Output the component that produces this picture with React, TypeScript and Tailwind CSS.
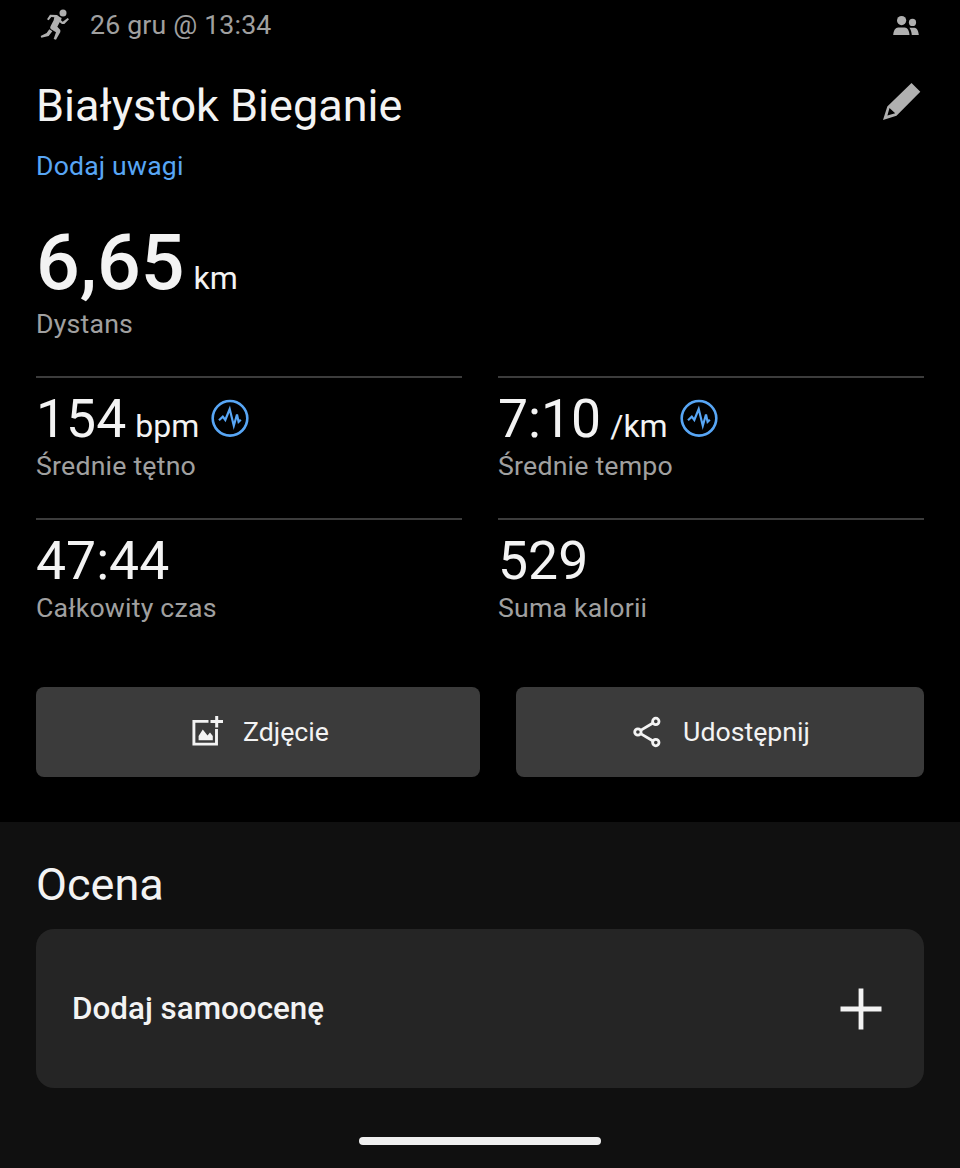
import type { ReactNode } from "react";

const stats = [
  { value: "154", unit: "bpm", label: "Średnie tętno", chart: true },
  { value: "7:10", unit: "/km", label: "Średnie tempo", chart: true },
  { value: "47:44", label: "Całkowity czas" },
  { value: "529", label: "Suma kalorii" },
];

function RunnerIcon() {
  return (
    <svg width="50" height="42" viewBox="0 0 150 126" fill="#b0b0b0">
      <circle cx="99" cy="24" r="10.5" />
      <path d="M60 29 L81 30 L89 36 L95 39 L93 46 L98 50 L113 39 L117 43 L103 57 L96 57 L89 52 L82 65 L91 75 L91 81 L78 104 L71 102 L78 82 L62 72 Q59 68 62 63 L71 46 L73 37 L64 36 L56 46 L51 43 Z" />
      <path d="M58 73 L67 79 L56 93 L34 98 L32 93 L50 84 Z" />
    </svg>
  );
}

function PeopleIcon() {
  return (
    <svg width="26" height="20" viewBox="0 0 26 20" fill="#b0b0b0">
      <circle cx="8.6" cy="4.6" r="4.6" />
      <circle cx="19.5" cy="6.4" r="3.6" />
      <path d="M0.2 19 C0.4 14.5 2.5 11.5 5.2 11.5 H11.6 C14.4 11.5 16.2 14.5 16.5 19 Z" />
      <path d="M16.4 11.8 H21.5 C24 12 25.5 15 25.8 19 H18.8 C18.6 16.3 17.8 13.8 16.4 11.8 Z" />
    </svg>
  );
}

function PencilIcon() {
  return (
    <svg width="38" height="38" viewBox="0 0 38 38" fill="#b0b0b0">
      <path
        fillRule="evenodd"
        d="M28.5 0 L37.3 8.7 L13.5 32.8 L0 37 L4.3 23.6 Z M6.5 25 L4.4 32.6 L12.2 30.2 Z"
      />
    </svg>
  );
}

function ChartIcon() {
  return (
    <svg
      width="38"
      height="38"
      viewBox="0 0 38 38"
      fill="none"
      stroke="#58a6f5"
      strokeWidth="2.6"
    >
      <circle cx="19" cy="19.3" r="17.3" />
      <path
        strokeWidth="2.2"
        d="M8 21.2 L11.8 17.7 L14.3 21 L18.7 10 L22.8 26.8 L26 15.5 L27.6 22.9 L29.8 20.7"
      />
    </svg>
  );
}

function PhotoIcon() {
  return (
    <svg width="32" height="32" viewBox="0 0 32 32" fill="none">
      <path
        d="M16.5 5.4 H1.9 V28.1 H24.5 V13"
        stroke="#f3f3f3"
        strokeWidth="2.9"
      />
      <path d="M24.7 0 V11.5 M18.5 5.5 H31" stroke="#f3f3f3" strokeWidth="3" />
      <path
        d="M6.6 24.2 V20 L10.8 13.5 L15.5 19.5 L18 16.5 L20.8 20 V24.2 Z"
        fill="#f3f3f3"
      />
    </svg>
  );
}

function ShareIcon() {
  return (
    <svg
      width="28"
      height="32"
      viewBox="0 0 28 32"
      fill="none"
      stroke="#f3f3f3"
      strokeWidth="2.8"
    >
      <circle cx="4.9" cy="16" r="3.2" />
      <circle cx="22.8" cy="5.4" r="3.2" />
      <circle cx="22.8" cy="26.6" r="3.2" />
      <path d="M7.6 14.4 L20 7 M7.6 17.6 L20 25" />
    </svg>
  );
}

function Label({ children }: { children: ReactNode }) {
  return (
    <p className="text-[26.7px] leading-8 tracking-[0.2px] text-[#a0a0a0]">
      {children}
    </p>
  );
}

export default function App() {
  return (
    <main
      className="flex h-[1168px] w-[960px] flex-col overflow-hidden bg-black text-[#f3f3f3]"
      style={{ fontFamily: "Roboto, sans-serif" }}
    >
      <section className="h-[822px] px-9 pt-2">
        <div className="flex h-9 items-center">
          <div className="-ml-1.5 w-[60px]">
            <RunnerIcon />
          </div>
          <span className="pb-[3px] text-[26.7px] leading-9 tracking-[0.18px] text-[#a0a0a0]">
            26 gru @ 13:34
          </span>
          <div className="mr-[5px] ml-auto">
            <PeopleIcon />
          </div>
        </div>
        <div className="mt-[35px] flex h-[54px] justify-between">
          <h1 className="text-[45px] leading-[54px]">Białystok Bieganie</h1>
          <div className="mt-1 mr-[3px]">
            <PencilIcon />
          </div>
        </div>
        <p className="mt-[17px] text-[26.6px] leading-8 tracking-[0.18px] text-[#58a6f5]">
          Dodaj uwagi
        </p>
        <div className="mt-[37px] flex h-[88px] items-baseline gap-[9px]">
          <span className="text-[77px] leading-[88px] font-medium">6,65</span>
          <span className="text-[32px] leading-8">km</span>
        </div>
        <div className="mt-px">
          <Label>Dystans</Label>
        </div>

        <div className="mt-9 grid grid-cols-2 gap-9">
          {stats.map((stat) => (
            <div
              key={stat.label}
              className="border-t-2 border-[#3c3c3c] pt-[11px]"
            >
              <div className="flex h-[61px]">
                <div className="flex items-baseline gap-[9px]">
                  <span className="text-[53.5px] leading-[60px]">
                    {stat.value}
                  </span>
                  {stat.unit && (
                    <span className="text-[32px] leading-8">{stat.unit}</span>
                  )}
                </div>
                {stat.chart && (
                  <div className="mt-2.5 ml-3">
                    <ChartIcon />
                  </div>
                )}
              </div>
              <Label>{stat.label}</Label>
            </div>
          ))}
        </div>

        <div className="mt-[63px] flex h-[90px] gap-9">
          <button className="flex w-[444px] items-center justify-center gap-[19px] rounded-lg bg-[#3b3b3b] pl-[5px] text-[26.7px]">
            <PhotoIcon />
            Zdjęcie
          </button>
          <button className="flex w-[408px] items-center justify-center gap-[22px] rounded-lg bg-[#3b3b3b] pl-[3px] text-[26.7px]">
            <ShareIcon />
            Udostępnij
          </button>
        </div>
      </section>

      <section className="flex flex-1 flex-col bg-[#101010] px-9 pt-9">
        <h2 className="text-[45px] leading-[54px]">Ocena</h2>
        <div className="mt-[17px] flex h-[159px] items-center justify-between rounded-[18px] bg-[#252525] pr-[42px] pl-9">
          <span className="text-[31.4px] font-medium">Dodaj samoocenę</span>
          <svg width="42" height="42" viewBox="0 0 42 42">
            <path
              d="M21 0.5 V41.5 M0.5 21 H41.5"
              stroke="#f3f3f3"
              strokeWidth="4.8"
            />
          </svg>
        </div>
        <div className="mx-auto mt-[49px] h-2 w-[242px] rounded-full bg-[#f0f0f0]" />
      </section>
    </main>
  );
}
